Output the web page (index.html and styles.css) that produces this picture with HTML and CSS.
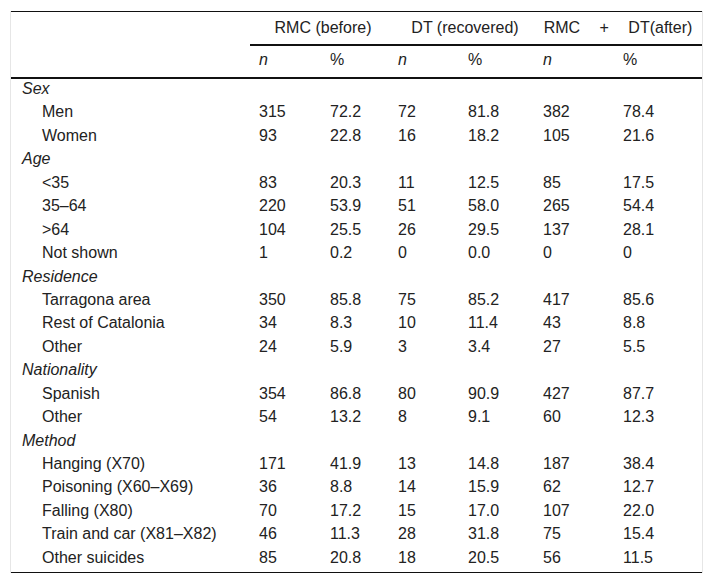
FILE: index.html
```html
<!DOCTYPE html>
<html lang="en">
<head>
<meta charset="utf-8">
<title>Table</title>
<link rel="stylesheet" href="styles.css">
</head>
<body>
<div class="frame">
<table class="data">
<colgroup>
<col class="c-label"><col class="c1"><col class="c2"><col class="c3"><col class="c4"><col class="c5"><col class="c6">
</colgroup>
<thead>
<tr class="h1">
<th></th>
<th colspan="2" class="grp">RMC (before)</th>
<th colspan="2" class="grp">DT (recovered)</th>
<th colspan="2" class="grp wide">RMC + DT(after)</th>
</tr>
<tr class="h2">
<th></th>
<th><i>n</i></th><th>%</th>
<th><i>n</i></th><th>%</th>
<th><i>n</i></th><th>%</th>
</tr>
</thead>
<tbody>
<tr class="first"><td class="cat" colspan="7">Sex</td></tr>
<tr><td class="sub">Men</td><td>315</td><td>72.2</td><td>72</td><td>81.8</td><td>382</td><td>78.4</td></tr>
<tr><td class="sub">Women</td><td>93</td><td>22.8</td><td>16</td><td>18.2</td><td>105</td><td>21.6</td></tr>
<tr><td class="cat" colspan="7">Age</td></tr>
<tr><td class="sub">&lt;35</td><td>83</td><td>20.3</td><td>11</td><td>12.5</td><td>85</td><td>17.5</td></tr>
<tr><td class="sub">35–64</td><td>220</td><td>53.9</td><td>51</td><td>58.0</td><td>265</td><td>54.4</td></tr>
<tr><td class="sub">&gt;64</td><td>104</td><td>25.5</td><td>26</td><td>29.5</td><td>137</td><td>28.1</td></tr>
<tr><td class="sub">Not shown</td><td>1</td><td>0.2</td><td>0</td><td>0.0</td><td>0</td><td>0</td></tr>
<tr><td class="cat" colspan="7">Residence</td></tr>
<tr><td class="sub">Tarragona area</td><td>350</td><td>85.8</td><td>75</td><td>85.2</td><td>417</td><td>85.6</td></tr>
<tr><td class="sub">Rest of Catalonia</td><td>34</td><td>8.3</td><td>10</td><td>11.4</td><td>43</td><td>8.8</td></tr>
<tr><td class="sub">Other</td><td>24</td><td>5.9</td><td>3</td><td>3.4</td><td>27</td><td>5.5</td></tr>
<tr><td class="cat" colspan="7">Nationality</td></tr>
<tr><td class="sub">Spanish</td><td>354</td><td>86.8</td><td>80</td><td>90.9</td><td>427</td><td>87.7</td></tr>
<tr><td class="sub">Other</td><td>54</td><td>13.2</td><td>8</td><td>9.1</td><td>60</td><td>12.3</td></tr>
<tr><td class="cat" colspan="7">Method</td></tr>
<tr><td class="sub">Hanging (X70)</td><td>171</td><td>41.9</td><td>13</td><td>14.8</td><td>187</td><td>38.4</td></tr>
<tr><td class="sub">Poisoning (X60–X69)</td><td>36</td><td>8.8</td><td>14</td><td>15.9</td><td>62</td><td>12.7</td></tr>
<tr><td class="sub">Falling (X80)</td><td>70</td><td>17.2</td><td>15</td><td>17.0</td><td>107</td><td>22.0</td></tr>
<tr><td class="sub">Train and car (X81–X82)</td><td>46</td><td>11.3</td><td>28</td><td>31.8</td><td>75</td><td>15.4</td></tr>
<tr class="last"><td class="sub">Other suicides</td><td>85</td><td>20.8</td><td>18</td><td>20.5</td><td>56</td><td>11.5</td></tr>
</tbody>
</table>
</div>
</body>
</html>
```
FILE: styles.css
```css
html, body {
  margin: 0;
  padding: 0;
  background: #fff;
}
body {
  font-family: "Liberation Sans", Arial, sans-serif;
  font-size: 16px;
  color: #222;
}
.frame {
  margin: 11px 0 0 10px;
  width: 693px;
  box-sizing: border-box;
  border-left: 1px solid #e6e6e6;
  border-right: 1px solid #e6e6e6;
}
.data {
  width: 691px;
  border-collapse: collapse;
  table-layout: fixed;
  border-top: 1px solid #111;
  border-bottom: 1px solid #111;
}
.c-label { width: 239px; }
.c1 { width: 71px; }
.c2 { width: 68px; }
.c3 { width: 70px; }
.c4 { width: 75px; }
.c5 { width: 80px; }
.c6 { width: 88px; }
th {
  font-weight: normal;
  text-align: left;
  padding: 0 0 0 9px;
  line-height: 18px;
}
.h1 th {
  padding-top: 7px;
  padding-bottom: 7px;
}
.h1 th.grp {
  text-align: center;
  padding-left: 9px;
  padding-right: 2px;
  border-bottom: 2px solid #111;
}
.h1 th.wide {
  word-spacing: 15px;
  padding-left: 2px;
}
.h2 th {
  padding-top: 5px;
  padding-bottom: 8px;
  border-bottom: 2px solid #111;
}
td {
  padding: 2.5px 0 2.5px 9px;
  line-height: 18.44px;
  white-space: nowrap;
}
td.cat {
  font-style: italic;
  padding-left: 11px;
}
td.sub {
  padding-left: 31px;
}
tr.first td {
  padding-top: 1px;
}
tr.last td {
  padding-bottom: 5px;
}
```
